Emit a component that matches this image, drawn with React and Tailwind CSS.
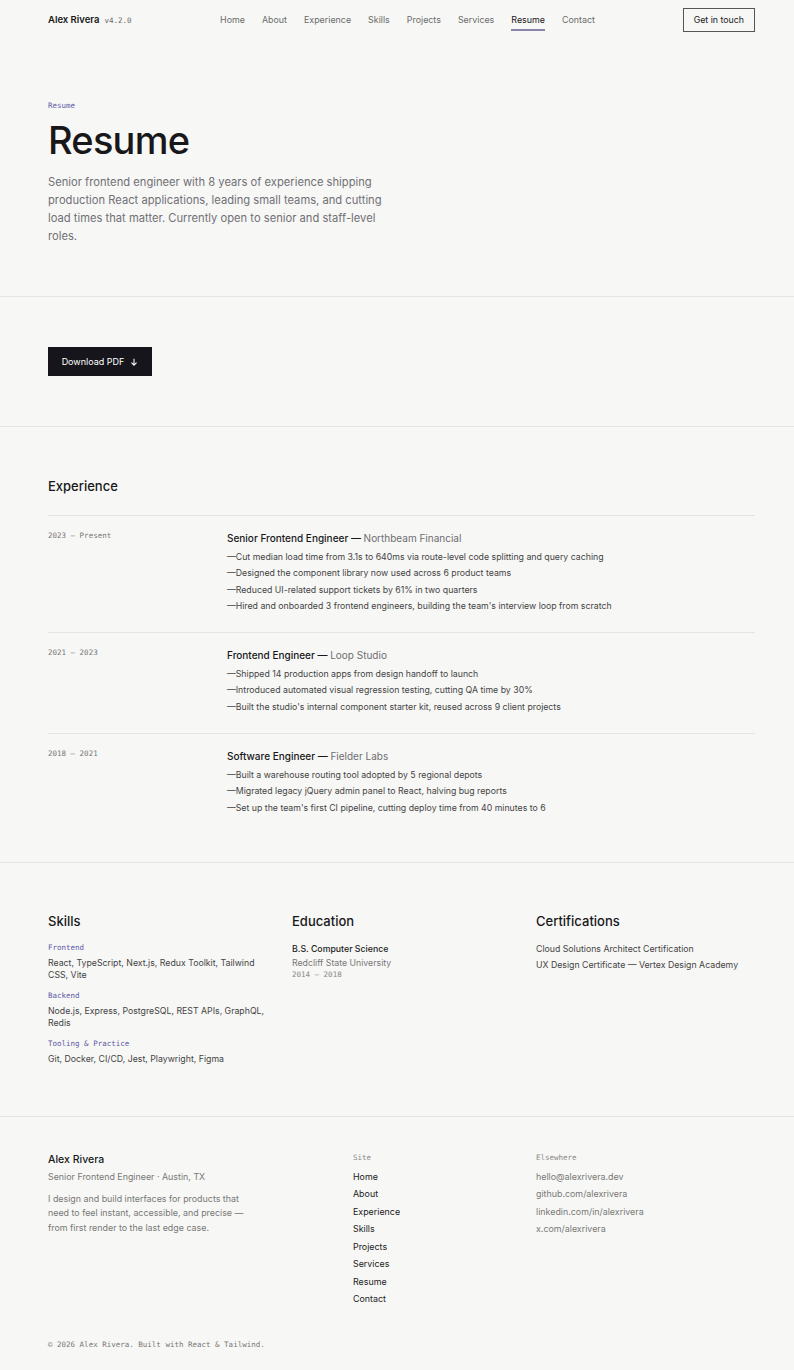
const navLinks = ["Home", "About", "Experience", "Skills", "Projects", "Services", "Resume", "Contact"];

const jobs = [
  {
    dates: "2023 — Present",
    role: "Senior Frontend Engineer",
    company: "Northbeam Financial",
    points: [
      "Cut median load time from 3.1s to 640ms via route-level code splitting and query caching",
      "Designed the component library now used across 6 product teams",
      "Reduced UI-related support tickets by 61% in two quarters",
      "Hired and onboarded 3 frontend engineers, building the team's interview loop from scratch",
    ],
  },
  {
    dates: "2021 — 2023",
    role: "Frontend Engineer",
    company: "Loop Studio",
    points: [
      "Shipped 14 production apps from design handoff to launch",
      "Introduced automated visual regression testing, cutting QA time by 30%",
      "Built the studio's internal component starter kit, reused across 9 client projects",
    ],
  },
  {
    dates: "2018 — 2021",
    role: "Software Engineer",
    company: "Fielder Labs",
    points: [
      "Built a warehouse routing tool adopted by 5 regional depots",
      "Migrated legacy jQuery admin panel to React, halving bug reports",
      "Set up the team's first CI pipeline, cutting deploy time from 40 minutes to 6",
    ],
  },
];

const skills = [
  { label: "Frontend", items: "React, TypeScript, Next.js, Redux Toolkit, Tailwind CSS, Vite" },
  { label: "Backend", items: "Node.js, Express, PostgreSQL, REST APIs, GraphQL, Redis" },
  { label: "Tooling & Practice", items: "Git, Docker, CI/CD, Jest, Playwright, Figma" },
];

const elsewhere = ["hello@alexrivera.dev", "github.com/alexrivera", "linkedin.com/in/alexrivera", "x.com/alexrivera"];

const mono = "font-['DejaVu_Sans_Mono','Liberation_Mono',monospace]";

export default function App() {
  return (
    <div className="min-h-[1370px] bg-[#f7f7f5] font-['Inter','Noto_Sans',sans-serif] text-[#18181b]">
      {/* nav */}
      <header className="flex h-10 items-center justify-between pl-12 pr-[39px]">
        <div className="flex w-[150px] items-baseline gap-[5px]">
          <span className="text-[9.5px] font-semibold">Alex Rivera</span>
          <span className={`${mono} text-[7.5px] text-[#6b6b6b]`}>v4.2.0</span>
        </div>
        <nav className="ml-[12px] flex items-center gap-[17px] text-[8.9px] text-[#6b6b6b]">
          {navLinks.map((l) =>
            l === "Resume" ? (
              <span key={l} className="relative text-[#18181b]">
                {l}
                <span className="absolute -bottom-[4px] left-0 right-0 h-[1.5px] bg-[#8a84ad]" />
              </span>
            ) : (
              <span key={l}>{l}</span>
            )
          )}
        </nav>
        <div className="flex w-[150px] justify-end">
          <button className="h-6 border border-[#555] px-[10px] text-[8.8px] text-[#18181b]">Get in touch</button>
        </div>
      </header>

      {/* hero */}
      <section className="border-b border-[#e4e4e1] pb-[51px] pl-12 pr-[39px] pt-[61px]">
        <div className={`${mono} text-[7.5px] leading-[10px] text-[#5d57a8]`}>Resume</div>
        <h1 className="mt-[9px] text-[38px] font-medium leading-[40px] tracking-[-0.02em]">Resume</h1>
        <p className="mt-[13px] max-w-[340px] text-[11.2px] leading-[18px] text-[#707075]">
          Senior frontend engineer with 8 years of experience shipping production React applications, leading small teams, and cutting load times that matter. Currently open to senior and staff-level roles.
        </p>
      </section>

      {/* download */}
      <section className="border-b border-[#e4e4e1] pb-[50px] pl-12 pr-[39px] pt-[50px]">
        <button className="flex h-[29px] w-[104px] items-center justify-center gap-[6px] bg-[#15151b] text-[9px] text-white">
          Download PDF
          <svg width="8" height="8" viewBox="0 0 10 10" fill="none" stroke="currentColor" strokeWidth="1.3">
            <path d="M5 1v8M1.8 5.8 5 9l3.2-3.2" />
          </svg>
        </button>
      </section>

      {/* experience */}
      <section className="border-b border-[#e4e4e1] pb-[28px] pl-12 pr-[39px] pt-[50px]">
        <h2 className="text-[13px] font-medium leading-[18px]">Experience</h2>
        <div className="mt-[20px]">
          {jobs.map((j) => (
            <div key={j.role} className="grid grid-cols-[179px_1fr] border-t border-[#e4e4e1] pb-[18px] pt-[15px]">
              <div className={`${mono} text-[7.5px] leading-[10px] text-[#777]`}>{j.dates}</div>
              <div>
                <div className="text-[10px] leading-[14px]">
                  <span className="font-medium">{j.role} — </span>
                  <span className="text-[#6e6e73]">{j.company}</span>
                </div>
                <ul className="mt-[4px] text-[8.75px] leading-[16.3px] text-[#444]">
                  {j.points.map((p) => (
                    <li key={p}>—{p}</li>
                  ))}
                </ul>
              </div>
            </div>
          ))}
        </div>
      </section>

      {/* skills / education / certs */}
      <section className="grid grid-cols-3 gap-x-[25px] border-b border-[#e4e4e1] pb-[51px] pl-12 pr-[39px] pt-[49px]">
        <div>
          <h2 className="text-[13px] font-medium leading-[18px]">Skills</h2>
          <div className="mt-[13px] flex flex-col gap-[10px]">
            {skills.map((s) => (
              <div key={s.label}>
                <div className={`${mono} text-[7.5px] leading-[10px] text-[#5d57a8]`}>{s.label}</div>
                <div className="mt-[4px] text-[8.75px] leading-[12px] text-[#444]">{s.items}</div>
              </div>
            ))}
          </div>
        </div>
        <div>
          <h2 className="text-[13px] font-medium leading-[18px]">Education</h2>
          <div className="mt-[13px] text-[8.75px] leading-[12px]">
            <div className="font-medium text-[#222]">B.S. Computer Science</div>
            <div className="mt-[2px] text-[#777]">Redcliff State University</div>
            <div className={`${mono} text-[7.5px] text-[#888]`}>2014 — 2018</div>
          </div>
        </div>
        <div>
          <h2 className="text-[13px] font-medium leading-[18px]">Certifications</h2>
          <div className="mt-[11px] text-[8.75px] leading-[16px] text-[#444]">
            <div>Cloud Solutions Architect Certification</div>
            <div>UX Design Certificate — Vertex Design Academy</div>
          </div>
        </div>
      </section>

      {/* footer */}
      <footer className="pb-[22px] pl-12 pr-[39px] pt-[36px]">
        <div className="grid grid-cols-12 gap-x-[25px]">
          <div className="col-span-5">
            <div className="text-[10.5px] font-medium leading-[14px]">Alex Rivera</div>
            <div className="mt-[3px] text-[8.9px] leading-[14px] text-[#777]">Senior Frontend Engineer · Austin, TX</div>
            <p className="mt-[8px] max-w-[200px] text-[8.9px] leading-[14.5px] text-[#777]">
              I design and build interfaces for products that need to feel instant, accessible, and precise — from first render to the last edge case.
            </p>
          </div>
          <div className="col-span-3">
            <div className={`${mono} text-[7.5px] leading-[10px] text-[#888]`}>Site</div>
            <ul className="mt-[5px] text-[8.9px] leading-[17.5px] text-[#222]">
              {navLinks.map((l) => (
                <li key={l}>{l}</li>
              ))}
            </ul>
          </div>
          <div className="col-span-4">
            <div className={`${mono} text-[7.5px] leading-[10px] text-[#888]`}>Elsewhere</div>
            <ul className="mt-[5px] text-[8.9px] leading-[17.5px] text-[#777]">
              {elsewhere.map((l) => (
                <li key={l}>{l}</li>
              ))}
            </ul>
          </div>
        </div>
        <div className={`${mono} mt-[32px] text-[7.5px] leading-[10px] text-[#777]`}>© 2026 Alex Rivera. Built with React &amp; Tailwind.</div>
      </footer>
    </div>
  );
}
